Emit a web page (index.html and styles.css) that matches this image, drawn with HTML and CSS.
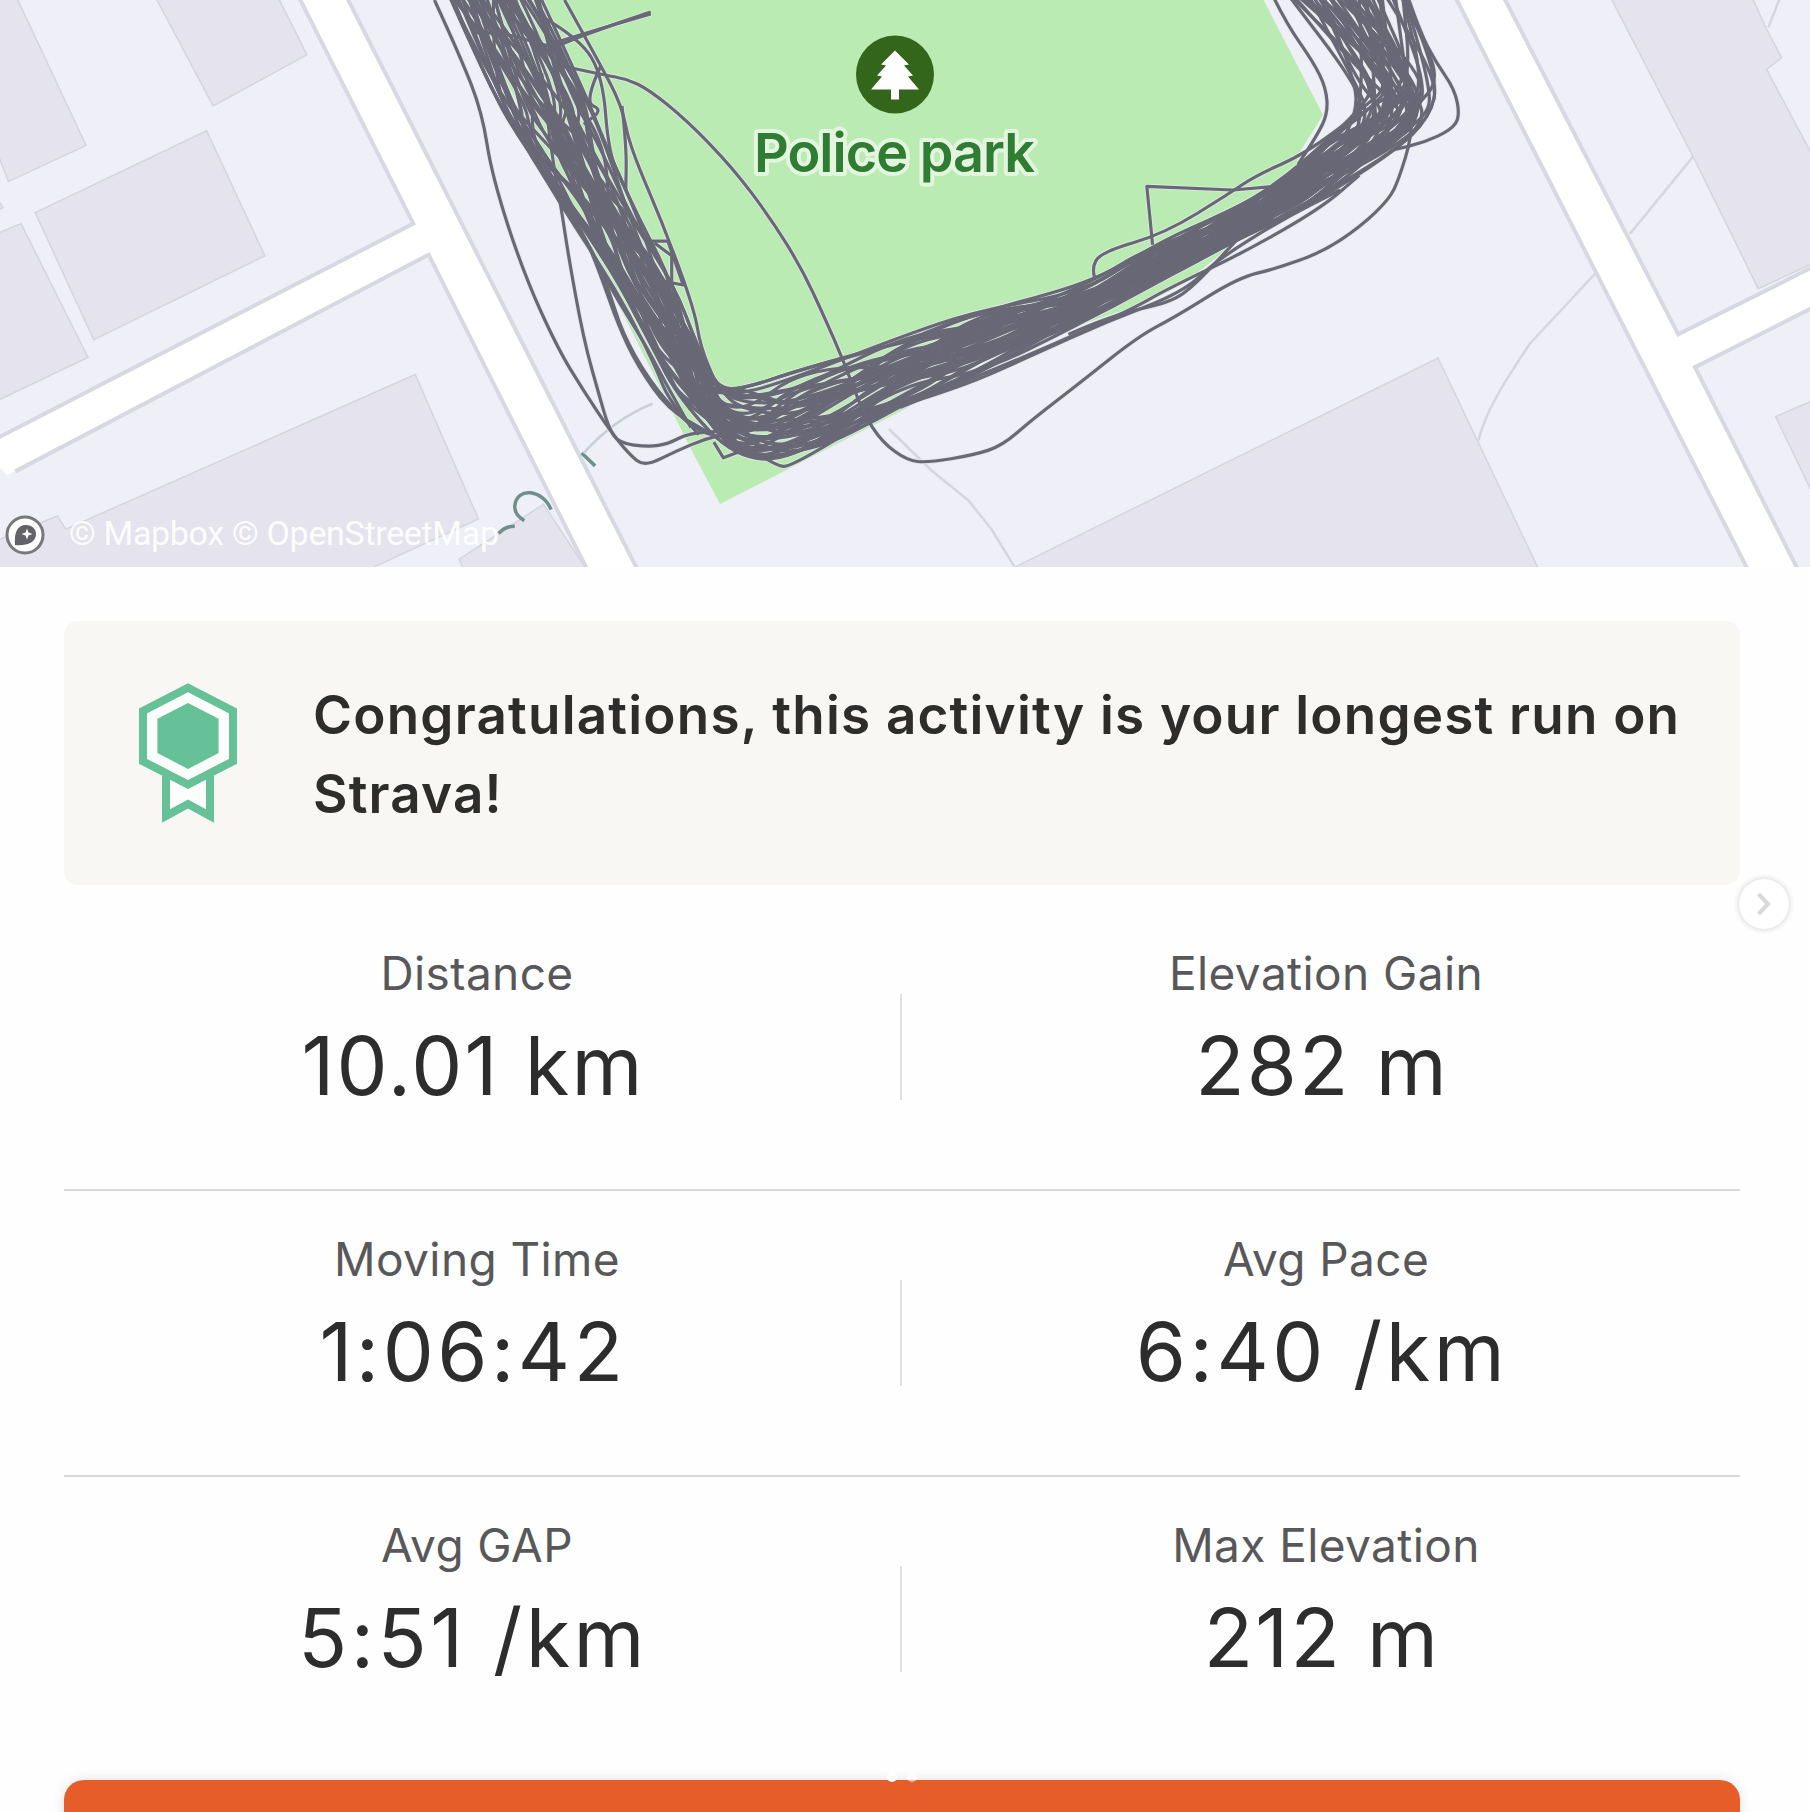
FILE: index.html
```html
<!DOCTYPE html>
<html lang="en">
<head>
<meta charset="utf-8">
<title>Activity</title>
<link rel="stylesheet" href="styles.css">
</head>
<body>
<main class="page">
<svg class="map" viewBox="0 0 1810 567">
  <!-- western blocks -->
  <g transform="scale(.3827 .3654)">
    <g class="building">
      <path d="M-10-10H42L225 398 22 497-10 410zM405-10L557 290 802 150 725-10zM92 582L540 358 692 700 245 930zM-10 640L55 612 230 978-10 1098zM-10 540L8 568-10 576zM172 1448L1085 1025 1250 1420 960 1560H-10V1480L150 1412zM1200 1530L1420 1380 1540 1570H1215z"/>
    </g>
    <path class="road" d="M780-10L1080 612-10 1201V1272L20 1300 1120 697 1540 1570H1671L905-10z"/>
    <g class="road-edge">
      <path d="M780-10L1080 612-10 1201M40 1290L1120 697 1540 1570M905-10L1671 1570"/>
    </g>
  </g>
  <!-- southern and eastern blocks -->
  <path class="building" d="M1013 568L1438 358 1539 570z"/>
  <path class="footway" d="M889 429L931 470 969 501 992 530 1014 566"/>
  <g transform="translate(1300) scale(.3333 .3654)">
    <path class="building" d="M930-10L1180 430 1375 790 1540 720V430L1400 190 1445 158 1400 80 1355-10zM1540 1096L1427 1140 1540 1355z"/>
    <path class="footway" d="M890 745L690 940C610 1050 560 1120 535 1205M1178 430L990 640M1442-10L1405 75"/>
    <path class="road" d="M465-10L1350 1570H1500L1185 1005 1540 841V730L1135 915 610-10z"/>
    <path class="road-edge" d="M465-10L1350 1570M1500 1570L1185 1005 1540 841M1540 730L1135 915 610-10"/>
  </g>
  <!-- park -->
  <path class="park" d="M463-5H1261L1323 115 1301 150 1283 205 1183 284 1145 303 1000 352 905 409 720 504 693 453z"/>
  <g class="street-name" transform="scale(.3827 .3654)">
    <path d="M1440 1395C1420 1340 1350 1330 1345 1385 1345 1405 1355 1415 1370 1425M1303 1460Q1320 1440 1345 1440M1520 1240L1555 1275"/>
    <path class="faint" d="M1525 1240C1585 1170 1645 1130 1705 1105"/>
  </g>
  <g id="halo" class="halo"></g>
  <g id="tracks" class="track"></g>
  <g>
    <circle cx="895" cy="74.500" r="39" fill="#33651a"/>
    <path fill="#fff" transform="translate(895 74.500)" d="M0-24L14-10 9-9 18 1 13 2 24 15H4V25H-4V15H-24L-13 2-18 1-9-9-14-10z"/>
    <text class="park-name" x="754" y="172" textLength="281">Police park</text>
  </g>
  <g>
    <circle cx="25" cy="535" r="18" fill="#fff" stroke="#77777c" stroke-width="3"/>
    <path fill="#626268" d="M15 545C14 533 17 525 26 525 32 525 36 529 36 534 36 543 26 546 15 545z"/>
    <path fill="#fff" d="M27 528.500L28.500 532.500 32.500 534 28.500 535.500 27 539.500 25.500 535.500 21.500 534 25.500 532.500z"/>
    <text class="credit" x="69" y="545" textLength="430">© Mapbox © OpenStreetMap</text>
  </g>
</svg>

<section class="details">
  <div class="award">
    <svg class="medal" viewBox="0 0 98 141">
      <path d="M27 93V133L49 121 71 133V93" fill="#fbfefb" stroke="#66c199" stroke-width="8"/>
      <path d="M49 4.800L94 28V78.300L49 101.600 4 78.300V28z" fill="#fbfefb" stroke="#66c199" stroke-width="8"/>
      <path d="M49 20L79.600 35.700V70L49 86 18.400 70V35.700z" fill="#66c199"/>
    </svg>
    <p class="award-text">Congratulations, this activity is your longest run on<br>Strava!</p>
  </div>
  <div class="row">
    <div class="stat"><span class="label">Distance</span><span class="value">10.01 km</span></div>
    <div class="stat"><span class="label">Elevation Gain</span><span class="value">282 m</span></div>
  </div>
  <div class="row">
    <div class="stat"><span class="label">Moving Time</span><span class="value wide">1:06:42</span></div>
    <div class="stat"><span class="label">Avg Pace</span><span class="value wide">6:40 /km</span></div>
  </div>
  <div class="row last">
    <div class="stat"><span class="label">Avg GAP</span><span class="value wide">5:51 /km</span></div>
    <div class="stat"><span class="label">Max Elevation</span><span class="value">212 m</span></div>
  </div>
  <div class="action"></div>
</section>
<svg class="next" viewBox="0 0 50 50"><path d="M19.500 15L29 25 19.500 35" fill="none" stroke="#d9d9d9" stroke-width="4"/></svg>
<div class="dots"><i></i><i></i></div>
</main>
<script src="tracks.js"></script>
</body>
</html>
```
FILE: styles.css
```css
* { box-sizing: border-box; }
body { margin: 0; background: #fefefe; font-family: Inter, "Liberation Sans", sans-serif; }
.page { position: relative; width: 1810px; height: 1812px; overflow: hidden; }
.map { display: block; width: 1810px; height: 567px; background: #eeeff7; }
.map path { vector-effect: non-scaling-stroke; }
.building, .building path { fill: #e5e3ee; stroke: #d5d5dc; stroke-width: 1.5; }
.road { fill: #fff; }
.road-edge, .road-edge path { fill: none; stroke: #d8d8e3; stroke-width: 4; }
.footway { fill: none; stroke: #d5d7dd; stroke-width: 2.5; }
.park { fill: #b9ebb2; }
.street-name { fill: none; stroke: #6d9188; stroke-width: 3.5; }
.street-name .faint { stroke: #c8d2d5; stroke-width: 2.5; }
.halo { fill: none; stroke: #e6eae9; stroke-width: 5; stroke-linejoin: round; opacity: .8; }
.track { fill: none; stroke: #686876; stroke-width: 3.2; stroke-linejoin: round; }
.park-name { font-size: 54px; font-weight: 600; fill: #2f7d32; stroke: #e4f5df; stroke-width: 8; stroke-linejoin: round; paint-order: stroke; }
.credit { font-family: Roboto, sans-serif; font-size: 34px; fill: #fff; opacity: .9; }

.details { display: flex; flex-direction: column; height: 1245px; padding: 54px 70px 0 64px; }
.award { display: flex; flex: none; align-items: flex-start; height: 264px; margin-bottom: 20px; padding: 62px 0 0 75px; border-radius: 14px; background: #f8f7f4; }
.medal { flex: none; width: 98px; height: 141px; margin-right: 76px; }
.award-text { margin: -7px 0 0; font-size: 53px; font-weight: 600; line-height: 79px; letter-spacing: 1.2px; color: #2d2d2b; white-space: nowrap; }
.row { display: flex; flex: none; height: 286px; border-bottom: 2px solid #d9d9d9; }
.row.last { border-bottom-color: transparent; }
.stat { position: relative; display: flex; flex: none; width: 50%; flex-direction: column; align-items: center; padding-top: 38px; }
.stat:first-child { padding-right: 22px; }
.stat:first-child::after { content: ""; position: absolute; right: 0; top: 89px; width: 2px; height: 106px; background: #e0e0e0; }
.label { padding-left: 10px; font-size: 46px; line-height: 60px; letter-spacing: .4px; color: #58585a; }
.value { margin-top: 13px; padding-left: 2px; font-size: 81px; line-height: 100px; letter-spacing: 2.2px; color: #2d2d2d; }
.value.wide { letter-spacing: 3.5px; }
.action { flex: none; height: 60px; margin-top: 17px; border-radius: 20px 20px 0 0; background: #e75d2a; box-shadow: 0 0 12px rgba(60, 60, 60, .15); }
.next { position: absolute; left: 1739px; top: 879px; width: 50px; height: 50px; border-radius: 50%; background: #fff; box-shadow: 0 0 6px rgba(0, 0, 0, .2); }
.dots { position: absolute; left: 887px; top: 1772px; display: flex; gap: 10px; }
.dots i { width: 10px; height: 10px; border-radius: 50%; background: #fff; }
.dots i + i { opacity: .6; }
```
FILE: tracks.js
```js
// Lap corridor: [inner x, inner y, outer x, outer y] at each station.
const corridor = [
  [536, -12, 446, -12], [583, 88, 490, 88], [606, 146, 524, 146], [639, 219, 578, 219],
  [674, 285, 620, 285], [698, 347, 652, 347], [718, 388, 680, 400],
  [743, 389, 738, 461], [802, 369, 802, 457], [900, 337, 902, 407],
  [976, 311, 980, 373], [1091, 283, 1076, 326], [1149, 247, 1151, 286], [1229, 211, 1244, 236],
  [1283, 179, 1302, 210], [1326, 142, 1394, 152], [1356, 113, 1430, 117],
  [1356, 84, 1438, 80], [1283, -12, 1402, -12]
];
let seed = 11;
const random = () => (seed = (seed * 16807) % 2147483647) / 2147483647;

function smooth(points) {
  let d = `M${points[0]}`;
  for (let i = 1; i < points.length - 1; i++) {
    const [x, y] = points[i], [u, v] = points[i + 1];
    d += `Q${x} ${y} ${(x + u) / 2} ${(y + v) / 2}`;
  }
  return d + `L${points[points.length - 1]}`;
}

const paths = [];
for (let n = 0; n < 46; n++) {
  const home = 0.1 + 0.8 * n / 45;
  let drift = 0;
  paths.push(smooth(corridor.map(([a, b, c, e]) => {
    drift = drift * 0.3 + (random() - 0.5) * 0.8;
    const t = Math.min(1, Math.max(0, home + drift));
    return [+(a + (c - a) * t).toFixed(1), +(b + (e - b) * t).toFixed(1)];
  })));
}

// Laps that stray from the corridor, each half recorded in its own tile.
const west = [
  [90,0,160,160,215,310,240,480,320,740,410,950,480,1070,550,1180,600,1245,640,1277,720,1235,800,1200,880,1180],
  [370,200,400,450,420,560,440,700,480,930,520,1080,545,1170,572,1213,650,1223,700,1215,755,1185,850,1180],
  [140,0,220,210,300,350,400,520,500,680,545,790,580,910,650,1040,740,1150,800,1190,880,1200],
  [150,-10,250,240,340,430,480,640,550,790,640,940,700,1060,760,1170],
  [160,-10,240,220,330,400,420,560,520,720,600,860,670,1010,700,1090,780,1190],
  [300,300,400,500,480,640,520,740,570,890,620,1000,700,1120,800,1180],
  [430,0,520,170,580,290,600,400,690,620,770,850,785,950,830,1060],
  [400,130,480,95,655,33], [380,125,480,92,655,38],
  [370,45,470,105,530,210,545,420,590,520], [190,90,250,85,370,120,400,130],
  [580,290,592,400,590,520], [525,180,480,280,530,300,480,340],
  [420,180,530,205,590,215,650,245,750,330,870,460,970,600,1050,735,1110,870,1160,990,1210,1130,1260,1210,1325,1260,1380,1266,1500,1245,1573,1220,1650,1150,1780,1045,1930,920,2030,865,2190,760,2290,735,2410,690,2510,620,2585,545,2610,490,2645,370,2640,250],
  [940,1245,985,1275,1018,1278,1200,1165]
];
const east = [
  [975,-10,1010,65,1080,170,1113,240,1118,310,1090,370,1040,450],
  [1330,0,1360,90,1400,170,1450,245,1463,320,1440,355,1370,390,1290,410],
  [1310,-10,1380,130,1405,225,1350,290,1240,420],
  [510,765,500,735,525,690,690,640,860,530,930,480,1060,420,1200,310],
  [0,1110,160,1060,350,970,540,880,740,800,830,710,1000,600,1150,520],
  [0,1115,180,1040,350,965,600,850,700,790,900,690,1100,570,1200,480],
  [440,915,560,860,700,830,760,790,860,680,920,610]
];
const angular = [
  [820, 1210, 845, 1253, 890, 1235],
  [655, 660, 700, 660, 740, 780, 690, 770],
  [665, 665, 710, 700, 710, 780]
];
const pairs = (list, offset) => {
  const out = [];
  for (let i = 0; i < list.length; i += 2) out.push([offset + list[i] * 0.3827, list[i + 1] * 0.3654]);
  return out;
};
west.forEach(l => paths.push(smooth(pairs(l, 400))));
east.forEach(l => paths.push(smooth(pairs(l, 900))));
angular.forEach(l => paths.push("M" + pairs(l, 400).join("L")));
paths.push("M" + pairs([660,670,645,510,870,520,980,510,1100,450], 900).join("L"));

const markup = paths.map(d => `<path d="${d}"/>`).join("");
document.getElementById("halo").innerHTML = markup;
document.getElementById("tracks").innerHTML = markup;
```
